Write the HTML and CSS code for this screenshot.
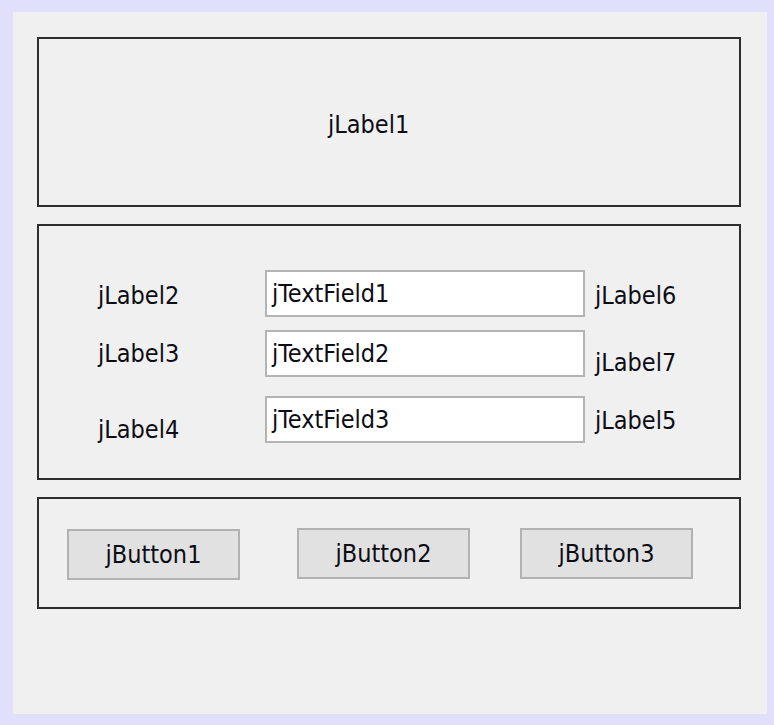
FILE: index.html
```html
<!DOCTYPE html>
<html>
<head>
<meta charset="utf-8">
<link rel="stylesheet" href="styles.css">
</head>
<body>
<div class="frame">
  <div class="panel">
    <div class="box box-top">
      <span class="lbl">jLabel1</span>
    </div>
    <div class="box box-form">
      <div class="form">
        <span class="lbl l2">jLabel2</span>
        <div class="field">jTextField1</div>
        <span class="lbl l6">jLabel6</span>
        <span class="lbl l3">jLabel3</span>
        <div class="field">jTextField2</div>
        <span class="lbl l7">jLabel7</span>
        <span class="lbl l4">jLabel4</span>
        <div class="field">jTextField3</div>
        <span class="lbl l5">jLabel5</span>
      </div>
    </div>
    <div class="box box-buttons">
      <button class="btn b1">jButton1</button>
      <button class="btn b2">jButton2</button>
      <button class="btn b3">jButton3</button>
    </div>
  </div>
</div>
</body>
</html>
```
FILE: styles.css
```css
html, body {
  margin: 0;
  padding: 0;
  background: #e0e0fd;
}
.frame {
  width: 774px;
  height: 725px;
  box-sizing: border-box;
  padding: 12px 7px 11px 13px;
  background: #e0e0fd;
}
.panel {
  height: 100%;
  box-sizing: border-box;
  background: #f0f0f0;
  padding: 25px 26px 0 24px;
  display: flex;
  flex-direction: column;
  gap: 17px;
}
.box {
  border: 2px solid #2e2e2e;
  box-sizing: border-box;
}
.lbl,
.field,
.btn {
  font-family: "DejaVu Sans Condensed", "DejaVu Sans", sans-serif;
  font-size: 25px;
  color: #0c0c14;
}
.lbl {
  line-height: 30px;
}
.box-top {
  height: 170px;
  display: flex;
  align-items: flex-start;
  padding: 71px 0 0 289px;
}
.box-form {
  height: 256px;
  padding: 44px 0 0 59px;
}
.form {
  display: grid;
  grid-template-columns: 157px 320px auto;
  grid-template-rows: 60px 66px 47px;
  column-gap: 10px;
  align-items: start;
}
.field {
  height: 47px;
  box-sizing: border-box;
  border: 2px solid #b4b4b4;
  background: #ffffff;
  padding: 0 5px;
  display: flex;
  align-items: center;
}
.l2, .l6 { margin-top: 11px; }
.l3 { margin-top: 9px; }
.l7 { margin-top: 18px; }
.l4 { margin-top: 19px; }
.l5 { margin-top: 10px; }
.box-buttons {
  height: 112px;
  display: flex;
  align-items: flex-start;
  padding: 30px 0 0 28px;
}
.btn {
  width: 173px;
  height: 51px;
  box-sizing: border-box;
  border: 2px solid #b2b2b2;
  background: #e1e1e1;
  padding: 0;
  margin: 0;
}
.b2 { margin-left: 57px; margin-top: -1px; }
.b3 { margin-left: 50px; margin-top: -1px; }
```
